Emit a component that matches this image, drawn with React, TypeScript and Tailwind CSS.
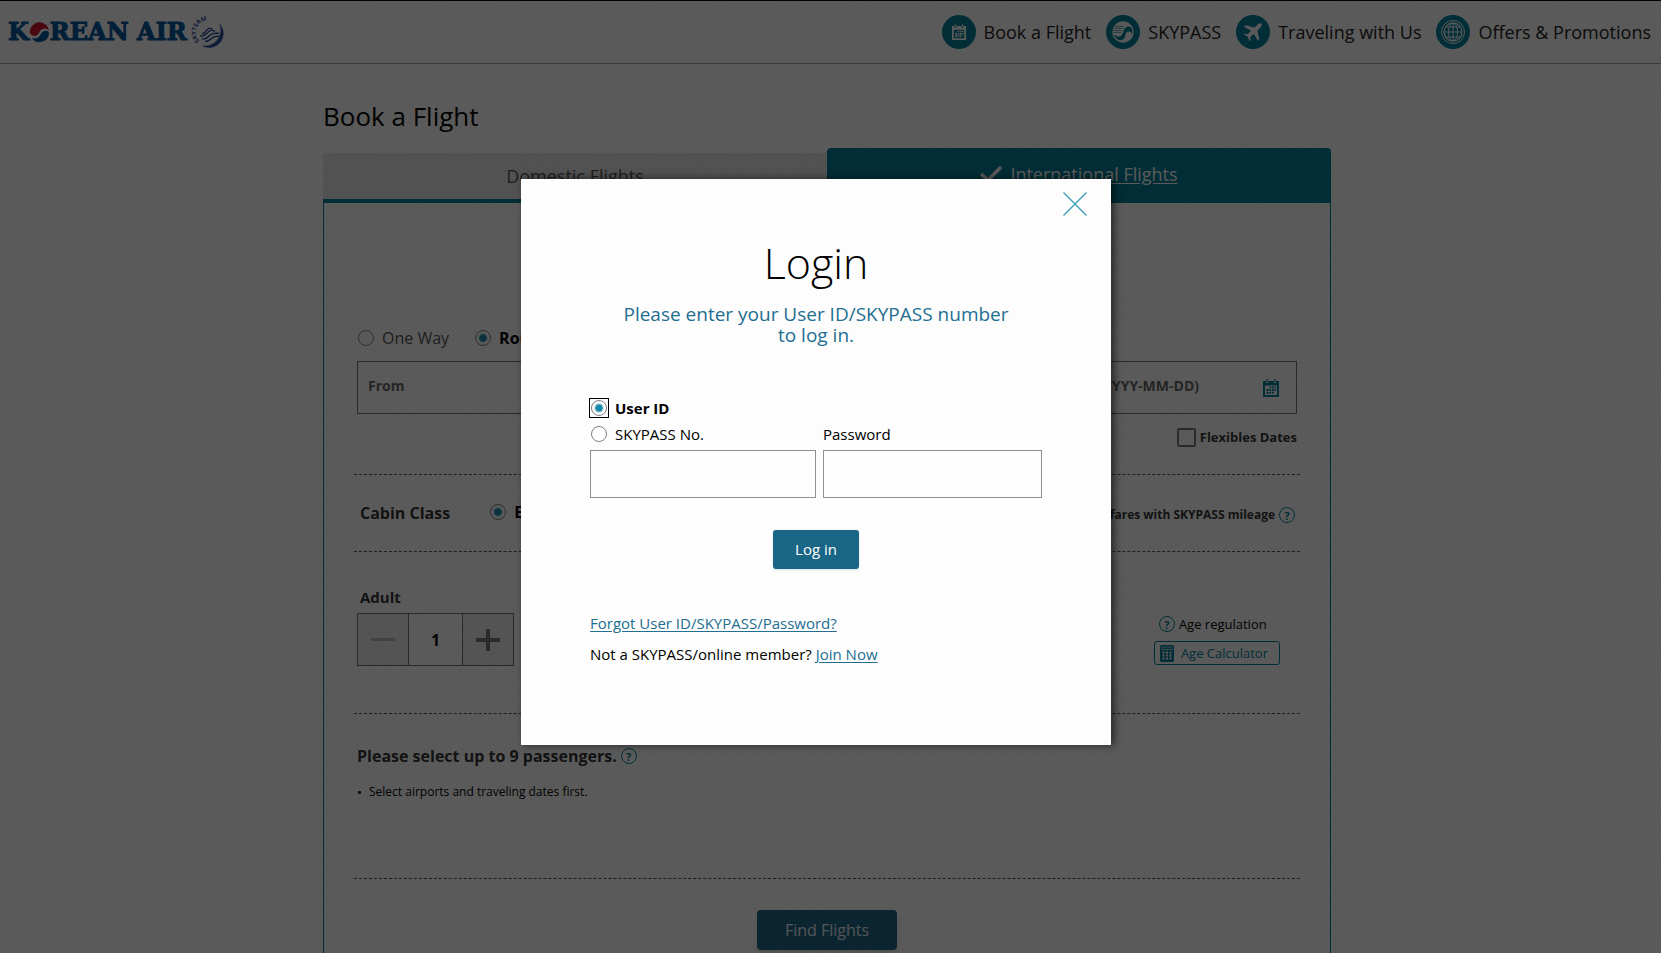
import { useState } from 'react'
import type { ReactNode } from 'react'

const navItems = [
  { label: 'Book a Flight', icon: <CalendarGlyph className="h-4 w-[14px] text-white" /> },
  { label: 'SKYPASS', icon: <TaegukGlyph /> },
  { label: 'Traveling with Us', icon: <PlaneGlyph /> },
  { label: 'Offers & Promotions', icon: <GlobeGlyph /> }
]

function CalendarGlyph({ className }: { className: string }) {
  return (
    <svg viewBox="0 0 16 18" className={className} aria-hidden="true">
      <path
        fillRule="evenodd"
        d="M0 2h3v2h2V2h6v2h2V2h3v16H0zM2 6.500v9.500h12V6.500z"
        fill="currentColor"
      />
      <path d="M4 0v3M12 0v3" stroke="currentColor" strokeWidth="1.200" />
      <path
        d="M6.500 7.500h1.800v1.800H6.500zM9 7.500h1.800v1.800H9zM11.500 7.500h1.500v1.800h-1.500zM3.500 10h2.200v2H3.500zM6.500 10h1.800v2H6.500zM9 10h1.800v2H9zM11.500 10h1.500v2h-1.500zM3.500 12.800h2.200v2H3.500zM6.500 12.800h1.800v2H6.500zM9 12.800h1.800v2H9z"
        fill="currentColor"
      />
    </svg>
  )
}

function TaegukGlyph() {
  return (
    <svg viewBox="0 0 22 22" className="h-[22px] w-[22px]" aria-hidden="true">
      <circle cx="11" cy="11" r="10" fill="none" stroke="#fff" strokeWidth="1.300" />
      <path
        d="M1 11A10 10 0 0 1 20 7C17.500 4.500 13.500 5.500 12 8.500C11 11 10.500 15 7 15.500C4.500 15.800 2 14 1 11Z"
        fill="#fff"
      />
      <path d="M21 11A10 10 0 0 1 6 19.500C10.500 19.500 13 17.500 13.300 14.500C13.600 12 15 10.500 17 10.500C19 10.500 19.800 12 19.500 14Z" fill="#fff" />
      <path d="M3 5.500h9M2 7.500h9M1 9.500h9M1.500 11.500h8" stroke="#007f99" strokeWidth=".6" />
    </svg>
  )
}

function PlaneGlyph() {
  return (
    <svg viewBox="0 0 20 20" className="h-5 w-5" aria-hidden="true">
      <path
        d="M18.500 1.500C17.500.6 15.500 1.500 14 3L11.500 5.400L2.500 3.200L1 4.700L8 8.800L4.600 12.200L2 11.600L1 12.600L4.600 14.600L6.500 19L7.600 18L7.200 15.200L10.800 11.800L14.800 18.800L16.300 17.300L14.400 8.400L17 6C18.500 4.500 19.400 2.500 18.500 1.500Z"
        fill="#fff"
      />
    </svg>
  )
}

function GlobeGlyph() {
  return (
    <svg viewBox="0 0 26 26" className="h-[26px] w-[26px]" fill="none" stroke="#fff" aria-hidden="true">
      <circle cx="13" cy="13" r="11.500" strokeWidth="1" />
      <circle cx="13" cy="13" r="9" strokeWidth="1.300" />
      <ellipse cx="13" cy="13" rx="4.500" ry="9" strokeWidth="1" />
      <path d="M13 4v18M4 13h18M6 8h14M6 18h14" strokeWidth="1" />
    </svg>
  )
}

function CalculatorGlyph() {
  return (
    <svg viewBox="0 0 14 17" className="h-[17px] w-[14px]" aria-hidden="true">
      <rect width="14" height="17" rx="1.500" fill="#007f99" />
      <rect x="2" y="2" width="10" height="2.500" fill="none" stroke="#fff" strokeWidth=".7" />
      <path
        d="M2.500 7.500h2M6 7.500h2M9.500 7.500h2M2.500 10.500h2M6 10.500h2M9.500 10.500h2M2.500 13.500h2M6 13.500h2M9.500 13.500h2"
        stroke="#fff"
        strokeWidth="1.800"
      />
    </svg>
  )
}

function HelpIcon({ label }: { label: string }) {
  return (
    <button
      type="button"
      aria-label={label}
      className="flex h-4 w-4 shrink-0 items-center justify-center rounded-full border border-[#007f99] text-[11px] leading-none font-bold text-[#007f99]"
    >
      ?
    </button>
  )
}

function Logo() {
  return (
    <a href="#home" aria-label="Korean Air, SkyTeam" className="flex items-center gap-[6px]">
      <span className="flex items-center font-['DejaVu_Serif',serif] text-2xl leading-8 font-bold whitespace-nowrap text-[#00569c] [-webkit-text-stroke:1px_#00569c]">
        K
        <svg viewBox="0 0 22 22" className="h-[22px] w-[21px] shrink-0" aria-hidden="true">
          <path
            d="M1 12A10 10 0 0 1 20.900 9.500C18.500 6.500 13.500 6.500 11.500 10C10 13.500 8 15.500 5 15C3 14.700 1.500 13.500 1 12Z"
            fill="#d0102a"
          />
          <path d="M21 12A10 10 0 0 1 3 17.500C8 18.500 11 16.500 12.500 13C14 9.500 19.500 8 21 12Z" fill="#00569c" />
        </svg>
        REAN AIR
      </span>
      <svg viewBox="0 0 34 34" className="h-[34px] w-[34px] shrink-0 overflow-visible" aria-hidden="true">
        <path d="M27 9.500A14 14 0 0 1 10 31A16 16 0 0 0 27 9.500Z" fill="#1d4a94" stroke="#1d4a94" strokeWidth=".6" />
        <path
          d="M7 21C11 22 13 19 16 16.500C18 15 20 15 22 16.500M9 24C13 25 15 21.500 18 19.500C20 18 23 18.500 26 18M12 26.500C16 26.500 17.500 24 20 22.500C22 21.500 24 21.500 26 21M9 18.500C11.500 19 12.500 16.500 14.500 14.500C16 13 18 13 19.500 14.500"
          fill="none"
          stroke="#1d4a94"
          strokeWidth="1.400"
        />
        <path id="skyteam-arc" d="M6.600 26A11.500 11.500 0 0 1 23 8.500" fill="none" />
        <text className="fill-[#1d4a94] font-['Open_Sans',sans-serif] text-[6px] font-bold">
          <textPath href="#skyteam-arc">SKYTEAM</textPath>
        </text>
      </svg>
    </a>
  )
}

interface RadioProps {
  name: string
  label: string
  checked: boolean
  onChange: () => void
  className?: string
  boxed?: boolean
}

function Radio({ name, label, checked, onChange, className = '', boxed = false }: RadioProps) {
  return (
    <label className={`flex items-center gap-2 ${className}`}>
      <span className={`flex ${boxed ? 'outline outline-offset-1 outline-black' : ''}`}>
        <input
          type="radio"
          name={name}
          checked={checked}
          onChange={onChange}
          className="h-4 w-4 shrink-0 appearance-none rounded-full border border-[#808080] bg-white outline-none checked:bg-[radial-gradient(circle,#1a8caa_0_3px,#fff_5px)]"
        />
      </span>
      <span>{label}</span>
    </label>
  )
}

function Row({ className, children }: { className: string; children: ReactNode }) {
  return <div className={`border-b border-dashed border-[#555] ${className}`}>{children}</div>
}

function BookingPage() {
  const [trip, setTrip] = useState('Round Trip')
  const [adults, setAdults] = useState(1)

  return (
    <div className="h-full bg-white">
      <header className="flex h-16 items-center justify-between border-t border-b border-t-black border-b-[#aaa] pr-[10px] pl-2">
        <Logo />
        <nav className="flex items-center gap-[15px]">
          {navItems.map(item => (
            <a key={item.label} href="#menu" className="flex items-center gap-2 text-lg text-[#222]">
              <span className="flex h-[34px] w-[34px] items-center justify-center rounded-full bg-[#007f99]">
                {item.icon}
              </span>
              {item.label}
            </a>
          ))}
        </nav>
      </header>

      <main className="mx-auto w-[1015px] max-w-full pr-[7px]">
        <h1 className="pt-8 text-[26px] leading-10 font-normal text-black">Book a Flight</h1>

        <div className="mt-3 flex items-end">
          <button type="button" className="h-[50px] flex-1 border-b-4 border-[#007f99] bg-[#e8e8e8] text-lg text-[#555]">
            Domestic Flights
          </button>
          <button
            type="button"
            className="flex h-[55px] flex-1 items-center justify-center gap-2 rounded-t bg-[#007f99] pb-1 text-lg text-white"
          >
            <svg viewBox="0 0 22 18" className="h-[18px] w-[22px]" aria-hidden="true">
              <path d="M1 9l7 6L21 2" fill="none" stroke="#fff" strokeWidth="3.500" />
            </svg>
            <span className="underline underline-offset-2">International Flights</span>
          </button>
        </div>

        <section className="border-x border-[#007f99] px-[30px]">
          <Row className="h-[272px] px-[3px] pt-[121px]">
            <div className="flex h-7 gap-[26px] pl-px text-base text-[#555]">
              <Radio name="trip" label="One Way" checked={trip === 'One Way'} onChange={() => setTrip('One Way')} />
              <Radio
                name="trip"
                label="Round Trip"
                checked={trip === 'Round Trip'}
                onChange={() => setTrip('Round Trip')}
                className="font-bold text-black"
              />
            </div>
            <div className="mt-[9px] grid grid-cols-2">
              <input
                aria-label="From"
                placeholder="From"
                className="h-[53px] border border-[#777] px-[10px] pb-1 text-sm font-bold placeholder:text-[#666]"
              />
              <div className="flex h-[53px] items-center justify-end gap-16 border border-l-0 border-[#777] pr-[17px]">
                <input
                  aria-label="Departure date"
                  placeholder="(YYYY-MM-DD)"
                  className="w-[145px] pb-1 text-right text-sm font-bold placeholder:text-[#666]"
                />
                <CalendarGlyph className="h-[18px] w-4 text-[#007f99]" />
              </div>
            </div>
            <label className="mt-[14px] flex items-center justify-end gap-1 text-[13px] font-bold text-[#333]">
              <input type="checkbox" className="h-[19px] w-[19px] appearance-none rounded-xs border-2 border-[#777]" />
              Flexibles Dates
            </label>
          </Row>

          <Row className="flex h-[77px] items-center pr-1 pl-[6px]">
            <h2 className="text-base font-bold text-[#333]">Cabin Class</h2>
            <Radio
              name="cabin"
              label="Economy"
              checked
              onChange={() => {}}
              className="ml-10 pb-0.5 text-base font-bold text-black"
            />
            <div className="ml-auto flex items-center gap-1 pt-1 pr-px text-xs font-bold text-[#333]">
              Search for fares with SKYPASS mileage
              <HelpIcon label="Mileage help" />
            </div>
          </Row>

          <Row className="flex h-[162px] items-start justify-between pr-5 pl-[3px]">
            <div className="pt-[31px]">
              <p className="pl-[3px] text-[15px] leading-7 font-bold text-[#333]">Adult</p>
              <div className="mt-0.5 flex h-[53px] w-[157px] border border-[#777] text-base font-bold">
                <button
                  type="button"
                  aria-label="Remove adult"
                  onClick={() => setAdults(Math.max(1, adults - 1))}
                  className="flex w-[50px] items-center justify-center bg-[#eee]"
                >
                  <span className="h-[3px] w-6 bg-[#bbb]" />
                </button>
                <output className="flex flex-1 items-center justify-center border-x border-[#777]">{adults}</output>
                <button
                  type="button"
                  aria-label="Add adult"
                  onClick={() => setAdults(adults + 1)}
                  className="flex w-[50px] items-center justify-center bg-[#eee]"
                >
                  <svg viewBox="0 0 24 22" className="h-[22px] w-6" aria-hidden="true">
                    <path d="M0 11h24M12 0v22" stroke="#777" strokeWidth="4" />
                  </svg>
                </button>
              </div>
            </div>
            <div className="pt-[62px] text-[13px] leading-5">
              <div className="flex items-center gap-1 pl-[5px]">
                <HelpIcon label="Age help" />
                Age regulation
              </div>
              <button
                type="button"
                className="mt-[7px] flex h-6 items-center gap-[7px] rounded-[3px] border border-[#007f99] pr-[11px] pl-[5px] text-[#007f99]"
              >
                <CalculatorGlyph />
                Age Calculator
              </button>
            </div>
          </Row>

          <Row className="h-[165px] px-[3px] pt-7">
            <div className="flex items-center gap-1 leading-7 font-bold text-[#333]">
              Please select up to 9 passengers.
              <HelpIcon label="Passenger help" />
            </div>
            <ul className="mt-3 pl-px text-xs leading-5">
              <li className="flex items-center gap-2">
                <span className="h-[3px] w-[3px] bg-[#333]" />
                Select airports and traveling dates first.
              </li>
            </ul>
          </Row>

          <div className="flex justify-center pt-[31px] pb-10">
            <button type="button" className="h-10 rounded-sm bg-[#1a6687] px-7 text-base text-white/90 shadow-md">
              Find Flights
            </button>
          </div>
        </section>
      </main>
    </div>
  )
}

function LoginDialog() {
  const [loginType, setLoginType] = useState('User ID')

  return (
    <form
      role="dialog"
      aria-labelledby="login-title"
      onSubmit={e => e.preventDefault()}
      className="relative mt-[179px] mr-[29px] h-[566px] w-[590px] bg-[#fdfdfd] px-[69px] pt-14 text-[15px] leading-[26px] text-black shadow-[3px_0_8px_rgba(0,0,0,0.6)]"
    >
      <button type="button" aria-label="Close" className="absolute top-[13px] right-6">
        <svg viewBox="0 0 24 24" className="h-6 w-6" aria-hidden="true">
          <path d="M.5.5l23 23M23.500.5l-23 23" stroke="#3a9dba" strokeWidth="1.300" />
        </svg>
      </button>
      <h2 id="login-title" className="text-center text-[43px] leading-[56px] font-light">
        Login
      </h2>
      <p className="mt-[13px] text-center text-[19px] leading-[21px] text-[#236e91]">
        Please enter your User ID/SKYPASS number
        <br />
        to log in.
      </p>

      <div className="mt-[49px] flex items-end gap-[7px]">
        <div className="w-[226px]">
          <Radio
            name="login"
            label="User ID"
            boxed
            checked={loginType === 'User ID'}
            onChange={() => setLoginType('User ID')}
            className="pl-px font-bold"
          />
          <Radio
            name="login"
            label="SKYPASS No."
            checked={loginType === 'SKYPASS No.'}
            onChange={() => setLoginType('SKYPASS No.')}
            className="pl-px"
          />
          <input aria-label={loginType} className="mt-[3px] block h-12 w-full border border-[#8f8f8f] px-2" />
        </div>
        <label className="w-[219px]">
          Password
          <input type="password" className="mt-[3px] block h-12 w-full border border-[#8f8f8f] px-2" />
        </label>
      </div>

      <div className="mt-8 flex justify-center">
        <button type="submit" className="h-[39px] rounded-[3px] bg-[#1a6687] px-[22px] pb-px text-white shadow-sm">
          Log in
        </button>
      </div>

      <p className="mt-[41px]">
        <a href="#forgot" className="text-[#236e91] underline underline-offset-2">
          Forgot User ID/SKYPASS/Password?
        </a>
      </p>
      <p className="mt-[5px]">
        Not a SKYPASS/online member?{' '}
        <a href="#join" className="text-[#236e91] underline underline-offset-2">
          Join Now
        </a>
      </p>
    </form>
  )
}

export default function App() {
  return (
    <div className="relative h-screen overflow-hidden font-['Open_Sans',sans-serif]">
      <BookingPage />
      <div className="absolute inset-0 flex items-start justify-center bg-black/65 bg-[repeating-linear-gradient(135deg,rgba(255,255,255,0.02)_0_1px,transparent_1px_3px)]">
        <LoginDialog />
      </div>
    </div>
  )
}
